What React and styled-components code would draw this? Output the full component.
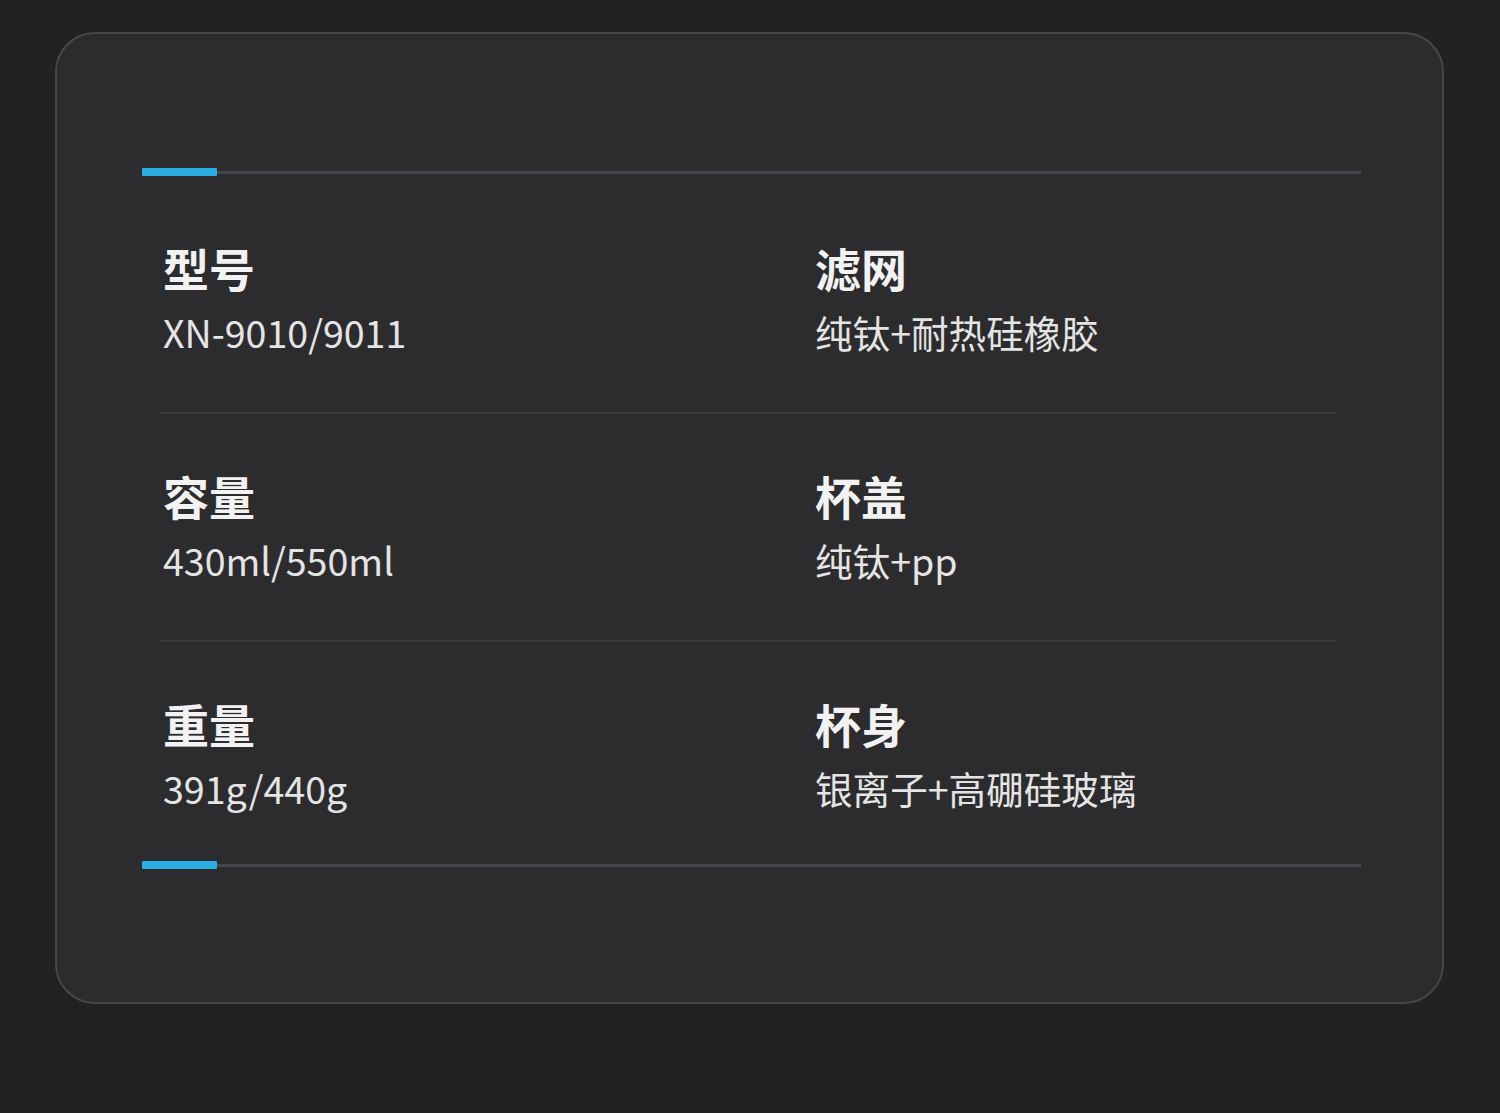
import React from "react";
import styled, { createGlobalStyle } from "styled-components";

const GlobalStyle = createGlobalStyle`
  html, body {
    margin: 0;
    padding: 0;
    background: #222224;
    font-family: "Noto Sans CJK SC", "Noto Sans", sans-serif;
  }
`;

const Page = styled.div`
  width: 1500px;
  height: 1113px;
  box-sizing: border-box;
  padding: 32px 56px 0 55px;
  background: #222224;
`;

const Card = styled.div`
  box-sizing: border-box;
  height: 972px;
  border: 2px solid #47474b;
  border-radius: 40px;
  background: #2c2c2f;
  padding: 134px 81px 0 85px;
`;

const Bar = styled.div`
  position: relative;
  height: 8px;
  display: flex;
  align-items: center;

  &::before {
    content: "";
    flex: 1;
    height: 3px;
    background: #47474b;
  }

  /* acento azul à esquerda */
  &::after {
    content: "";
    position: absolute;
    left: 0;
    top: 0;
    width: 75px;
    height: 8px;
    border-radius: 1px;
    background: #2cade3;
  }
`;

const Rows = styled.div`
  margin: 10px 24px 0 18px;
`;

const Row = styled.div`
  display: grid;
  grid-template-columns: 652px 1fr;
  padding: 51px 0 ${({ $last }) => ($last ? "48px" : "55px")} 3px;
  border-bottom: ${({ $last }) => ($last ? "none" : "2px solid #38383b")};
`;

const Spec = styled.div`
  display: flex;
  flex-direction: column;
`;

const Label = styled.div`
  font-size: 46px;
  line-height: 60px;
  font-weight: 700;
  color: #f2f2f2;
`;

const Value = styled.div`
  margin-top: 10px;
  font-size: 37.6px;
  line-height: 50px;
  font-weight: 400;
  color: #e4e4e4;
`;

const specs = [
  [
    { label: "型号", value: "XN-9010/9011" },
    { label: "滤网", value: "纯钛+耐热硅橡胶" },
  ],
  [
    { label: "容量", value: "430ml/550ml" },
    { label: "杯盖", value: "纯钛+pp" },
  ],
  [
    { label: "重量", value: "391g/440g" },
    { label: "杯身", value: "银离子+高硼硅玻璃" },
  ],
];

export default function App() {
  return (
    <>
      <GlobalStyle />
      <Page>
        <Card>
          <Bar />
          <Rows>
            {specs.map((row, i) => (
              <Row key={i} $last={i === specs.length - 1}>
                {row.map((s) => (
                  <Spec key={s.label}>
                    <Label>{s.label}</Label>
                    <Value>{s.value}</Value>
                  </Spec>
                ))}
              </Row>
            ))}
          </Rows>
          <Bar />
        </Card>
      </Page>
    </>
  );
}
